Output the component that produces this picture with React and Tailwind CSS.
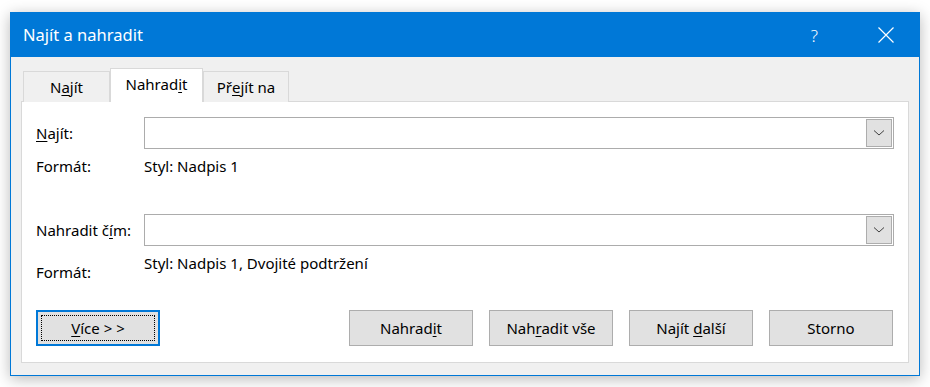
import React from "react";

const font = { fontFamily: '"Noto Sans", "Open Sans", sans-serif' };

function U({ children }) {
  return <span className="underline underline-offset-2 decoration-1">{children}</span>;
}

function Combo() {
  return (
    <div className="flex h-[32px] w-[750px] items-center justify-end border border-[#acacac] bg-white pr-[1px]">
      <div className="flex h-[28px] w-[26px] items-center justify-center border border-[#adadad] bg-[#e1e1e1]">
        <svg width="12" height="8" viewBox="0 0 12 8">
          <polyline points="1,1.5 6,6 11,1.5" fill="none" stroke="#404040" strokeWidth="1" />
        </svg>
      </div>
    </div>
  );
}

function Button({ children, focused }) {
  if (focused) {
    return (
      <div className="flex h-[36px] w-[124px] items-center justify-center border-2 border-[#0078d7] bg-[#e1e1e1] p-[3px]">
        <div className="flex h-full w-full items-center justify-center border border-dotted border-black">
          {children}
        </div>
      </div>
    );
  }
  return (
    <div className="flex h-[36px] w-[124px] items-center justify-center border border-[#adadad] bg-[#e1e1e1]">
      {children}
    </div>
  );
}

export default function App() {
  return (
    <div className="h-[387px] w-[930px] overflow-hidden bg-white pl-[10px] pt-[12px]" style={font}>
      <div className="flex h-[364px] w-[910px] flex-col border border-[#0078d7] bg-[#f0f0f0] shadow-[0_3px_14px_rgba(0,0,0,0.28)]">
        <div className="flex h-[44px] shrink-0 items-center bg-[#0078d7] pl-[12px] text-white">
          <span className="text-[16.5px] leading-none">Najít a nahradit</span>
          <span className="ml-auto mr-[60px] text-[17px] font-light leading-none">?</span>
          <svg width="16" height="16" viewBox="0 0 16 16" className="mr-[25px]">
            <path d="M0.5 0.5 L15.5 15.5 M15.5 0.5 L0.5 15.5" stroke="white" strokeWidth="1.2" />
          </svg>
        </div>

        <div className="flex flex-1 flex-col px-[10px] pb-[12px] pt-[11px] text-[15px] text-black">
          <div className="relative z-10 -mb-px flex items-end pl-[2px]">
            <div className="flex h-[31px] w-[87px] items-center justify-center border border-b-0 border-[#d9d9d9] bg-[#f0f0f0]">
              N<U>a</U>jít
            </div>
            <div className="flex h-[34px] w-[93px] items-center justify-center border border-b-0 border-[#d9d9d9] bg-white pb-[2px]">
              Nahrad<U>i</U>t
            </div>
            <div className="flex h-[31px] w-[86px] items-center justify-center border border-b-0 border-[#d9d9d9] bg-[#f0f0f0]">
              Př<U>e</U>jít na
            </div>
          </div>

          <div className="flex flex-1 flex-col border border-[#d9d9d9] bg-white pl-[14px] pt-[15px]">
            <div className="flex items-center">
              <div className="w-[108px]">
                <U>N</U>ajít:
              </div>
              <Combo />
            </div>
            <div className="mt-[7px] flex h-[20px] items-center">
              <div className="w-[108px]">Formát:</div>
              <div>Styl: Nadpis 1</div>
            </div>

            <div className="mt-[38px] flex items-center">
              <div className="w-[108px]">
                Nahradit č<U>í</U>m:
              </div>
              <Combo />
            </div>
            <div className="mt-[7px] flex">
              <div className="mt-[9px] flex h-[20px] w-[108px] items-center">Formát:</div>
              <div className="flex h-[20px] items-center">Styl: Nadpis 1, Dvojité podtržení</div>
            </div>

            <div className="mt-[28px] flex items-center">
              <Button focused>
                <span>
                  <U>V</U>íce &gt; &gt;
                </span>
              </Button>
              <div className="ml-auto mr-[15px] flex gap-[16px]">
                <Button>
                  <span>
                    Nahrad<U>i</U>t
                  </span>
                </Button>
                <Button>
                  <span>
                    Nah<U>r</U>adit vše
                  </span>
                </Button>
                <Button>
                  <span>
                    Najít <U>d</U>alší
                  </span>
                </Button>
                <Button>
                  <span>Storno</span>
                </Button>
              </div>
            </div>
          </div>
        </div>
      </div>
    </div>
  );
}
